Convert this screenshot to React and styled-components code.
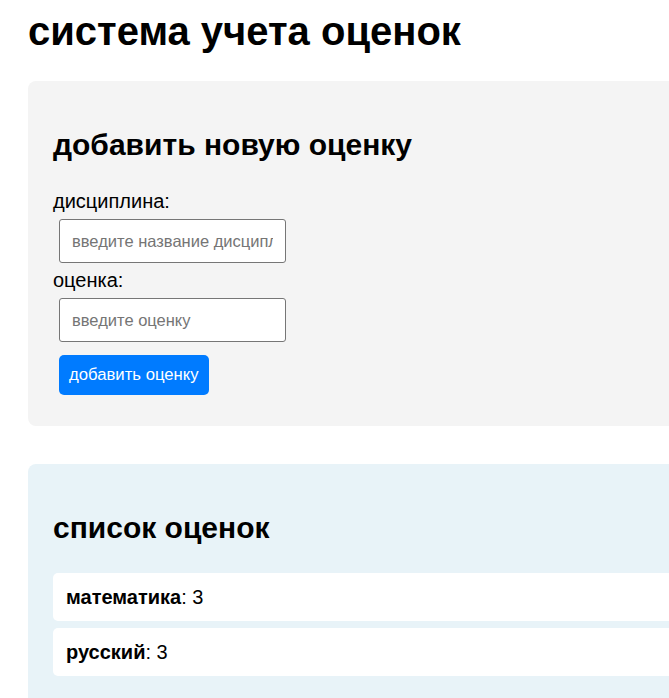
import React, { useState } from "react";
import styled, { createGlobalStyle } from "styled-components";

const GlobalStyle = createGlobalStyle`
  html, body {
    margin: 0;
    padding: 0;
    background: #fff;
    font-family: "Liberation Sans", Arial, sans-serif;
    color: #000;
  }
`;

const Page = styled.div`
  padding: 8px 28px 0;
  width: 700px;
`;

const Title = styled.h1`
  margin: 0 0 27px;
  font-size: 40px;
  font-weight: bold;
  line-height: 46px;
`;

const Panel = styled.section`
  background: ${(p) => p.$bg};
  border-radius: 8px;
  padding: 25px;
  margin-bottom: 38px;
`;

const Heading = styled.h2`
  margin: 22px 0 28px;
  font-size: 30px;
  line-height: 34px;
  font-weight: bold;
`;

const Label = styled.label`
  display: block;
  font-size: 20px;
  line-height: 23px;
`;

const Input = styled.input`
  display: block;
  box-sizing: border-box;
  width: 227px;
  height: 44px;
  margin: 6px 0 6px 6px;
  padding: 0 12px;
  border: 1px solid #767676;
  border-radius: 3px;
  font-family: "Liberation Sans", Arial, sans-serif;
  font-size: 16.5px;
  background: #fff;
  &::placeholder {
    color: #757575;
  }
`;

const Button = styled.button`
  display: block;
  margin: 13px 0 6px 6px;
  height: 40px;
  padding: 0 10px;
  border: none;
  border-radius: 5px;
  background: #007bff;
  color: #fff;
  font-family: "Liberation Sans", Arial, sans-serif;
  font-size: 16.7px;
  cursor: pointer;
`;

const List = styled.ul`
  list-style: none;
  margin: 0;
  padding: 0;
`;

const Item = styled.li`
  background: #fff;
  border-radius: 5px;
  padding: 0 13px;
  height: 48px;
  display: flex;
  align-items: center;
  margin-bottom: 7px;
  font-size: 20px;
  white-space: pre;
`;

export default function App() {
  const [grades, setGrades] = useState([
    { subject: "математика", grade: 3 },
    { subject: "русский", grade: 3 },
  ]);
  const [subject, setSubject] = useState("");
  const [grade, setGrade] = useState("");

  const add = () => {
    if (!subject || !grade) return;
    setGrades([...grades, { subject, grade }]);
    setSubject("");
    setGrade("");
  };

  return (
    <Page>
      <GlobalStyle />
      <Title>система учета оценок</Title>
      <Panel $bg="#f4f4f4">
        <Heading>добавить новую оценку</Heading>
        <Label htmlFor="subject">дисциплина:</Label>
        <Input
          id="subject"
          placeholder="введите название дисциплины"
          value={subject}
          onChange={(e) => setSubject(e.target.value)}
        />
        <Label htmlFor="grade">оценка:</Label>
        <Input
          id="grade"
          placeholder="введите оценку"
          value={grade}
          onChange={(e) => setGrade(e.target.value)}
        />
        <Button onClick={add}>добавить оценку</Button>
      </Panel>
      <Panel $bg="#e8f3f8">
        <Heading>список оценок</Heading>
        <List>
          {grades.map((g, i) => (
            <Item key={i}>
              <b>{g.subject}</b>: {g.grade}
            </Item>
          ))}
        </List>
      </Panel>
    </Page>
  );
}
